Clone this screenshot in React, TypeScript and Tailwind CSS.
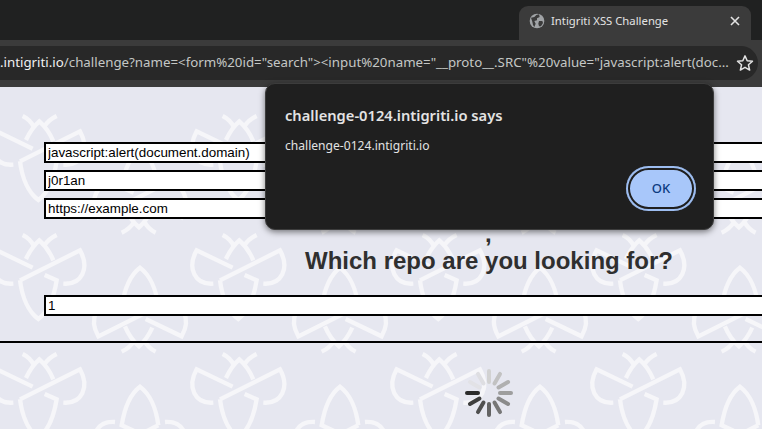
import React from 'react';

const uiFont = "font-['Noto_Sans',sans-serif]";

const Butterfly = () => (
    <g fill="none" stroke="#f6f6f9" strokeWidth="13">
        {/* antennae + head */}
        <path d="M68,60 C85,68 97,82 103,96" />
        <path d="M170,60 C153,68 141,78 133,92" />
        <path d="M78,132 C88,110 102,90 118,76 C134,90 150,112 160,136" />
        {/* wings */}
        <path d="M60,196 L240,106 C270,160 245,210 190,206" />
        <path d="M98,158 L-10,106 C-40,160 -15,210 40,206" />
        {/* body */}
        <path d="M60,196 C66,245 85,290 115,312 C145,290 162,245 170,196 L134,180" />
    </g>
);

// wallpaper behind the page, tile is 200x119
const Wallpaper = () => {
    const tiles: React.ReactNode[] = [];
    for (let r = -1; r < 4; r++) {
        for (let c = -1; c < 5; c++) {
            const x = c * 600;
            const y = r * 357;
            tiles.push(
                <g key={`${r}-${c}`} transform={`translate(${x} ${y})`}>
                    <Butterfly />
                    <g transform="translate(535 470) rotate(180)">
                        <Butterfly />
                    </g>
                </g>
            );
        }
    }
    return (
        <svg className="absolute inset-0 w-full h-full pointer-events-none select-none" xmlns="http://www.w3.org/2000/svg">
            <g transform="translate(0 128) scale(0.3333)">{tiles}</g>
        </svg>
    );
};

const Spinner = () => {
    const shades = ['#2b2b2b', '#3d3d3d', '#4f4f4f', '#636363', '#777777', '#8b8b8b', '#9e9e9e', '#b0b0b0', '#c2c2c2', '#d2d2d2', '#dedee2', '#e2e2e6'];
    return (
        <svg width="52" height="52" viewBox="-26 -26 52 52">
            {shades.map((color, i) => (
                <line
                    key={i}
                    x1="-11"
                    y1="0"
                    x2="-22"
                    y2="0"
                    stroke={color}
                    strokeWidth="4"
                    strokeLinecap="round"
                    transform={`rotate(${-30 * i})`}
                />
            ))}
        </svg>
    );
};

const Field = ({ value, mb }: { value: string; mb: string }) => (
    <input
        readOnly
        value={value}
        className={`block w-[760px] h-[21px] border-2 border-black bg-white px-[2px] text-[13.4px] text-black outline-none font-['Liberation_Sans',sans-serif] ${mb}`}
    />
);

const AlertDialog = () => (
    <div className={`absolute left-[265px] top-[83px] w-[449px] h-[147px] rounded-[10px] bg-[#1f1f1f] border border-[#3c3c3c] shadow-[0_2px_6px_rgba(0,0,0,0.5)] pl-[19px] pr-[17px] pt-[20px] text-[#e3e3e3] ${uiFont}`}>
        <div className="text-[14.7px] leading-[22px] font-semibold">challenge-0124.intigriti.io says</div>
        <div className="mt-[10px] text-[12.1px] leading-[20px]">challenge-0124.intigriti.io</div>
        <div className="mt-[10px] flex justify-end">
            <button className="w-[70px] h-[45px] pt-[1px] rounded-full bg-[#a8c7fa] shadow-[inset_0_0_0_2px_#9dbdf0,inset_0_0_0_4px_#1f1f1f] text-[13px] text-[#0b3a80] font-medium">
                OK
            </button>
        </div>
    </div>
);

export default function App() {
    return (
        <div className="relative w-[762px] h-[429px] overflow-hidden bg-[#e6e7f0]">
            {/* tab strip */}
            <div className="h-[40px] bg-[#202121] flex items-end pl-[519px]">
                <div className={`w-[232px] h-[34px] rounded-t-[9px] bg-[#3b3b3b] flex items-center pl-[10px] pr-[11px] pb-[4px] text-[11.3px] text-[#e3e3e3] ${uiFont}`}>
                    <svg width="16" height="16" viewBox="0 0 24 24" className="shrink-0">
                        <circle cx="12" cy="12" r="11" fill="#a0a3a6" />
                        <path d="M3 7 L8 6 L11 3 L15 2 L16 6 L12 8 L12 11 L8 12 L10 16 L8 21 L6 18 L5 13 Z" fill="#3b3b3b" />
                        <path d="M15 12 L20 12 L21 15 L18 20 L15 20 L14 16 Z" fill="#3b3b3b" />
                    </svg>
                    <span className="ml-[6px] flex-1">Intigriti XSS Challenge</span>
                    <svg width="10" height="10" viewBox="0 0 10 10" className="shrink-0">
                        <path d="M1 1 L9 9 M9 1 L1 9" stroke="#e3e3e3" strokeWidth="1.6" />
                    </svg>
                </div>
            </div>

            {/* toolbar */}
            <div className="h-[47px] bg-[#3b3b3b] pt-[6px] pb-[7px] pr-[4px]">
                <div className={`h-[34px] rounded-r-full bg-[#282828] flex items-center text-[13.3px] text-[#c4c7c5] whitespace-nowrap ${uiFont}`}>
                    <span className="w-[736px] shrink-0">
                        <span className="text-[#f1f1f1]">.intigriti.io</span>/challenge?name=&lt;form%20id="search"&gt;&lt;input%20name="__proto__.SRC"%20value="javascript:alert(doc...
                    </span>
                    <svg width="18" height="18" viewBox="0 0 24 24" fill="none" stroke="#e3e3e3" strokeWidth="2" className="shrink-0">
                        <path d="M12 2.5 L14.9 9 L22 9.7 L16.6 14.4 L18.2 21.4 L12 17.7 L5.8 21.4 L7.4 14.4 L2 9.7 L9.1 9 Z" strokeLinejoin="round" />
                    </svg>
                </div>
            </div>

            {/* page */}
            <div className="relative h-[342px] font-['Liberation_Sans',sans-serif]">
                <Wallpaper />
                <div className="relative pt-[55px]">
                    <div className="pl-[44px]">
                        <Field value="javascript:alert(document.domain)" mb="mb-[7px]" />
                        <Field value="j0r1an" mb="mb-[7px]" />
                        <Field value="https://example.com" mb="mb-0" />
                    </div>
                    <div className="mt-[4px] h-[23px] pl-[485px] text-[24px] leading-[21px] font-bold text-[#2f2f2f]">,</div>
                    <h1 className="h-[49px] pl-[305px] pt-[1px] text-[24px] leading-[28px] font-bold text-[#2f2f2f] whitespace-nowrap">
                        Which repo are you looking for?
                    </h1>
                    <div className="pl-[44px]">
                        <Field value="1" mb="mb-0" />
                    </div>
                    <div className="mt-[25px] h-[2px] bg-black" />
                    <div className="mt-[24px] flex justify-center pl-[454px] w-[524px]">
                        <Spinner />
                    </div>
                </div>
            </div>

            <AlertDialog />
        </div>
    );
}
